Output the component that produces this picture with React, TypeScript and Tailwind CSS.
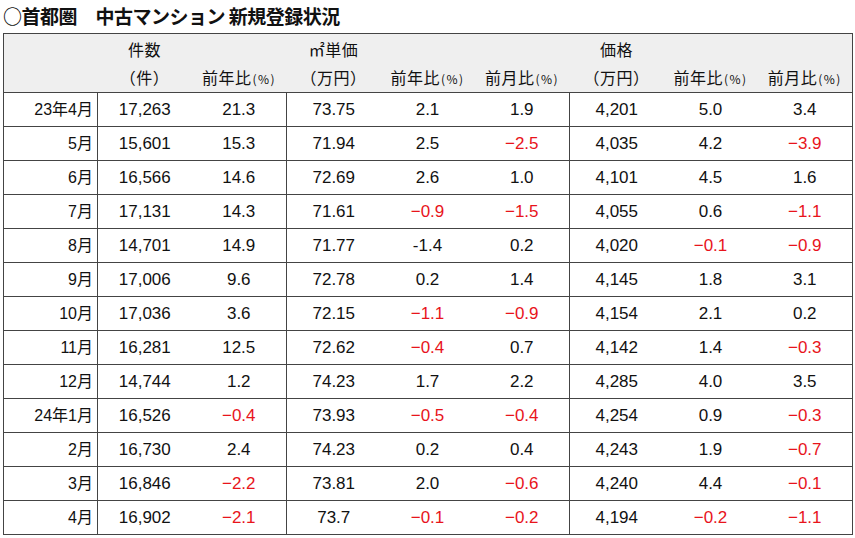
const rows: string[][] = [
  ["23年4月", "17,263", "21.3", "73.75", "2.1", "1.9", "4,201", "5.0", "3.4"],
  ["5月", "15,601", "15.3", "71.94", "2.5", "−2.5", "4,035", "4.2", "−3.9"],
  ["6月", "16,566", "14.6", "72.69", "2.6", "1.0", "4,101", "4.5", "1.6"],
  ["7月", "17,131", "14.3", "71.61", "−0.9", "−1.5", "4,055", "0.6", "−1.1"],
  ["8月", "14,701", "14.9", "71.77", "-1.4", "0.2", "4,020", "−0.1", "−0.9"],
  ["9月", "17,006", "9.6", "72.78", "0.2", "1.4", "4,145", "1.8", "3.1"],
  ["10月", "17,036", "3.6", "72.15", "−1.1", "−0.9", "4,154", "2.1", "0.2"],
  ["11月", "16,281", "12.5", "72.62", "−0.4", "0.7", "4,142", "1.4", "−0.3"],
  ["12月", "14,744", "1.2", "74.23", "1.7", "2.2", "4,285", "4.0", "3.5"],
  ["24年1月", "16,526", "−0.4", "73.93", "−0.5", "−0.4", "4,254", "0.9", "−0.3"],
  ["2月", "16,730", "2.4", "74.23", "0.2", "0.4", "4,243", "1.9", "−0.7"],
  ["3月", "16,846", "−2.2", "73.81", "2.0", "−0.6", "4,240", "4.4", "−0.1"],
  ["4月", "16,902", "−2.1", "73.7", "−0.1", "−0.2", "4,194", "−0.2", "−1.1"],
];

// columns that end a group get a vertical rule
const groupEnd = [0, 2, 5];

function Pct({ label }: { label: string }) {
  return (
    <span>
      {label}
      <span className="text-[12px] tracking-[1.5px] ml-[1px]">(%)</span>
    </span>
  );
}

export default function App() {
  return (
    <div className="w-[855px] h-[538px] bg-white overflow-hidden font-['Liberation_Sans','Noto_Sans_CJK_JP',sans-serif] text-[#111]">
      <div className="h-[33px] pl-[3px] pt-[3px] text-[19px] font-bold leading-[26px] tracking-[-0.5px] font-['Noto_Sans_CJK_JP',sans-serif]">
        ○首都圏　中古マンション 新規登録状況
      </div>
      <table className="ml-[3px] border-collapse table-fixed w-[849px]">
        <colgroup>
          <col className="w-[94px]" />
          <col className="w-[94px]" />
          <col className="w-[95px]" />
          <col className="w-[94px]" />
          <col className="w-[94px]" />
          <col className="w-[95px]" />
          <col className="w-[94px]" />
          <col className="w-[94px]" />
          <col className="w-[95px]" />
        </colgroup>
        <thead className="bg-[#efefef] text-[16px] font-['Noto_Sans_CJK_JP',sans-serif] tracking-[0.5px]">
          <tr className="h-[29px] border-t border-x border-[#444]">
            <th className="font-normal"></th>
            <th className="font-normal pt-[2px]">件数</th>
            <th></th>
            <th className="font-normal pt-[2px]">㎡単価</th>
            <th></th>
            <th></th>
            <th className="font-normal pt-[2px]">価格</th>
            <th></th>
            <th></th>
          </tr>
          <tr className="h-[30px] border-b border-x border-[#444]">
            <th></th>
            <th className="font-normal">（件）</th>
            <th className="font-normal"><Pct label="前年比" /></th>
            <th className="font-normal">（万円）</th>
            <th className="font-normal"><Pct label="前年比" /></th>
            <th className="font-normal"><Pct label="前月比" /></th>
            <th className="font-normal">（万円）</th>
            <th className="font-normal"><Pct label="前年比" /></th>
            <th className="font-normal"><Pct label="前月比" /></th>
          </tr>
        </thead>
        <tbody className="text-[17px]">
          {rows.map((r) => (
            <tr key={r[0]} className="h-[34px] border border-[#444]">
              {r.map((v, i) => (
                <td
                  key={i}
                  className={`${i === 0 ? "text-right pr-[4px] text-[16px]" : "text-center"} ${
                    groupEnd.includes(i) ? "border-r border-[#444]" : ""
                  } ${v.startsWith("−") ? "text-[#e8141b]" : ""}`}
                >
                  {v}
                </td>
              ))}
            </tr>
          ))}
        </tbody>
      </table>
    </div>
  );
}
